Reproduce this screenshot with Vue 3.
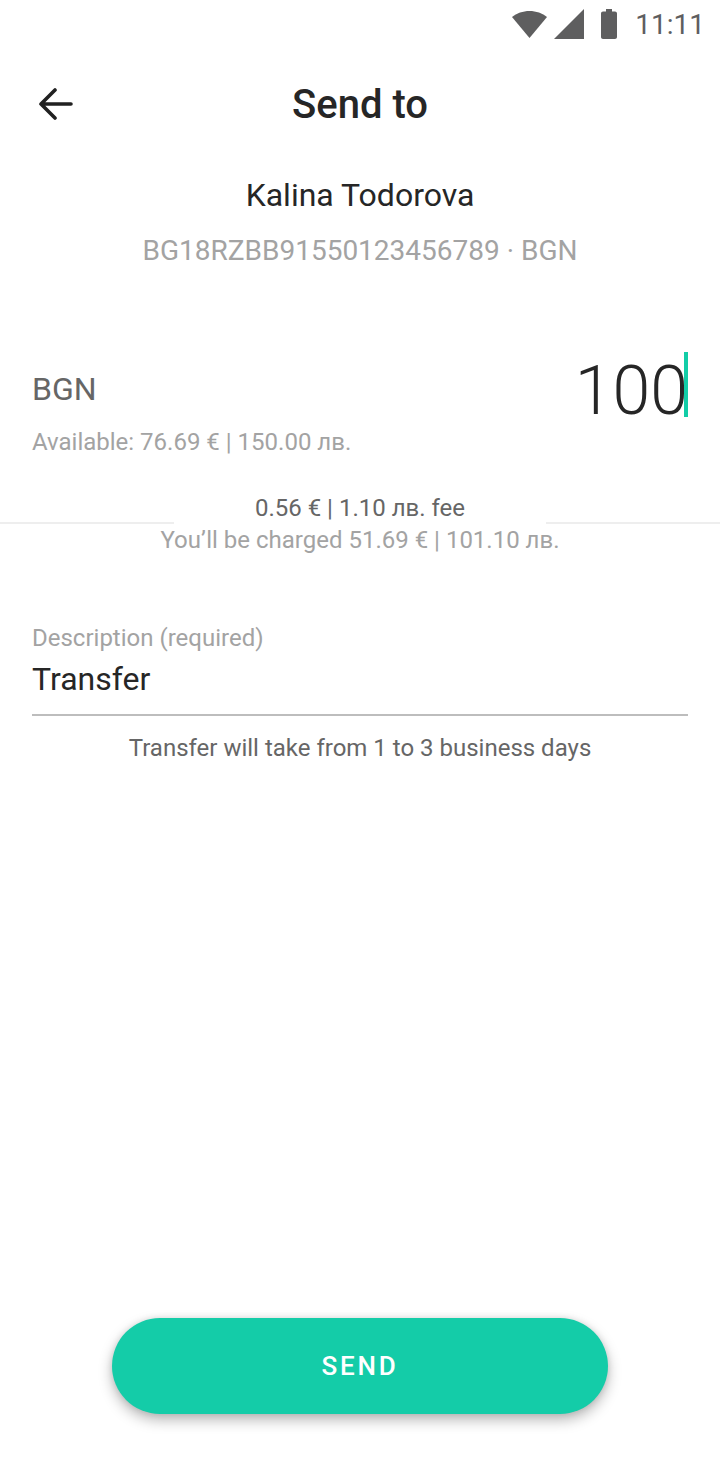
<script setup>
const statusTime = "11:11";
</script>

<template>
  <div class="page">
    <div class="status-bar">
      <svg class="wifi" width="36" height="27" viewBox="0 0 36 27">
        <path d="M0 6C4.500 2.200 11 0 17.500 0S30.500 2.200 35 6L17.500 27Z" fill="#5e5e5f" />
      </svg>
      <svg class="signal" width="30" height="30" viewBox="0 0 30 30">
        <path d="M0 30L30 0V30Z" fill="#5e5e5f" />
      </svg>
      <svg class="battery" width="16" height="30" viewBox="0 0 16 30">
        <path d="M5 0H11V2.500H14C15.100 2.500 16 3.400 16 4.500V28C16 29.100 15.100 30 14 30H2C.9 30 0 29.100 0 28V4.500C0 3.400 .9 2.500 2 2.500H5Z" fill="#5e5e5f" />
      </svg>
      <span class="time">{{ statusTime }}</span>
    </div>

    <header class="toolbar">
      <svg class="back" width="34" height="32" viewBox="0 0 34 32" fill="none">
        <path d="M2 16H32M16 2L2 16L16 30" stroke="#212121" stroke-width="3.600" stroke-linecap="round" stroke-linejoin="round" />
      </svg>
      <h1>Send to</h1>
    </header>

    <section class="recipient">
      <div class="name">Kalina Todorova</div>
      <div class="iban">BG18RZBB91550123456789 · BGN</div>
    </section>

    <section class="amount">
      <div class="amount-row">
        <span class="currency">BGN</span>
        <span class="value">100<i class="caret"></i></span>
      </div>
      <div class="available">Available: 76.69 € | 150.00 лв.</div>
    </section>

    <section class="fee">
      <div class="fee-line"><span>0.56 € | 1.10 лв. fee</span></div>
      <div class="charged">You’ll be charged 51.69 € | 101.10 лв.</div>
    </section>

    <section class="description">
      <label>Description (required)</label>
      <div class="input">Transfer</div>
      <p>Transfer will take from 1 to 3 business days</p>
    </section>

    <div class="spacer"></div>

    <div class="actions">
      <button class="send">SEND</button>
    </div>
  </div>
</template>

<style scoped>
.page {
  height: 1478px;
  display: flex;
  flex-direction: column;
  background: #fff;
  font-family: Roboto, "Liberation Sans", sans-serif;
  color: #262626;
  overflow: hidden;
}

.status-bar {
  height: 48px;
  display: flex;
  align-items: center;
  padding-right: 15px;
  box-sizing: border-box;
}

.wifi {
  margin-left: auto;
}

.signal {
  margin-left: 6px;
}

.battery {
  margin-left: 17px;
}

.time {
  margin-left: 18px;
  font-size: 28px;
  color: #5e5e5f;
}

.toolbar {
  position: relative;
  height: 112px;
  display: flex;
  align-items: center;
  justify-content: center;
}

.toolbar h1 {
  margin: 2px 0 0;
  font-size: 40px;
  font-weight: 500;
  line-height: 110px;
}

.back {
  position: absolute;
  left: 39px;
  top: 40px;
}

.recipient {
  text-align: center;
  padding-top: 14px;
}

.name {
  font-size: 32px;
  line-height: 42px;
}

.iban {
  margin-top: 15px;
  font-size: 28px;
  line-height: 40px;
  color: #a3a3a3;
}

.amount {
  padding: 0 32px;
  margin-top: 83px;
}

.amount-row {
  display: flex;
  align-items: center;
  justify-content: space-between;
  height: 72px;
}

.currency {
  margin-top: -2px;
  font-size: 32px;
  color: #666666;
}

.value {
  position: relative;
  margin-top: 2px;
  font-size: 68px;
  font-weight: 300;
  line-height: 72px;
}

.caret {
  position: absolute;
  right: 0;
  top: -3px;
  width: 4px;
  height: 65px;
  background: #12cda7;
}

.available {
  margin-top: -1px;
  font-size: 24px;
  line-height: 34px;
  color: #a3a3a3;
}

.fee {
  margin-top: 31px;
}

.fee-line {
  position: relative;
  display: flex;
  justify-content: center;
  height: 36px;
  font-size: 24px;
  line-height: 36px;
  color: #666666;
}

.fee-line::before {
  content: "";
  position: absolute;
  left: 0;
  right: 0;
  top: 32px;
  height: 2px;
  background: #eeeeee;
}

.fee-line span {
  position: relative;
  padding: 0 81px;
  height: 36px;
  background: #fff;
}

.charged {
  margin-top: -4px;
  text-align: center;
  font-size: 24px;
  line-height: 36px;
  color: #a3a3a3;
}

.description {
  margin-top: 64px;
  padding: 0 32px;
}

.description label {
  display: block;
  font-size: 24px;
  line-height: 32px;
  color: #a3a3a3;
}

.input {
  height: 57px;
  padding-top: 3px;
  font-size: 32px;
  line-height: 44px;
  border-bottom: 2px solid #bdbdbd;
}

.description p {
  margin: 15px 0 0;
  text-align: center;
  font-size: 24px;
  line-height: 34px;
  color: #666666;
}

.spacer {
  flex: 1;
}

.actions {
  display: flex;
  justify-content: center;
  padding-bottom: 64px;
}

.send {
  width: 496px;
  height: 96px;
  border: 0;
  border-radius: 48px;
  background: #14cca8;
  color: #fff;
  font-family: inherit;
  font-size: 26px;
  font-weight: 500;
  letter-spacing: 2.800px;
  box-shadow: 0 6px 14px rgba(0, 0, 0, 0.28), 0 0 6px rgba(0, 0, 0, 0.1);
}
</style>
